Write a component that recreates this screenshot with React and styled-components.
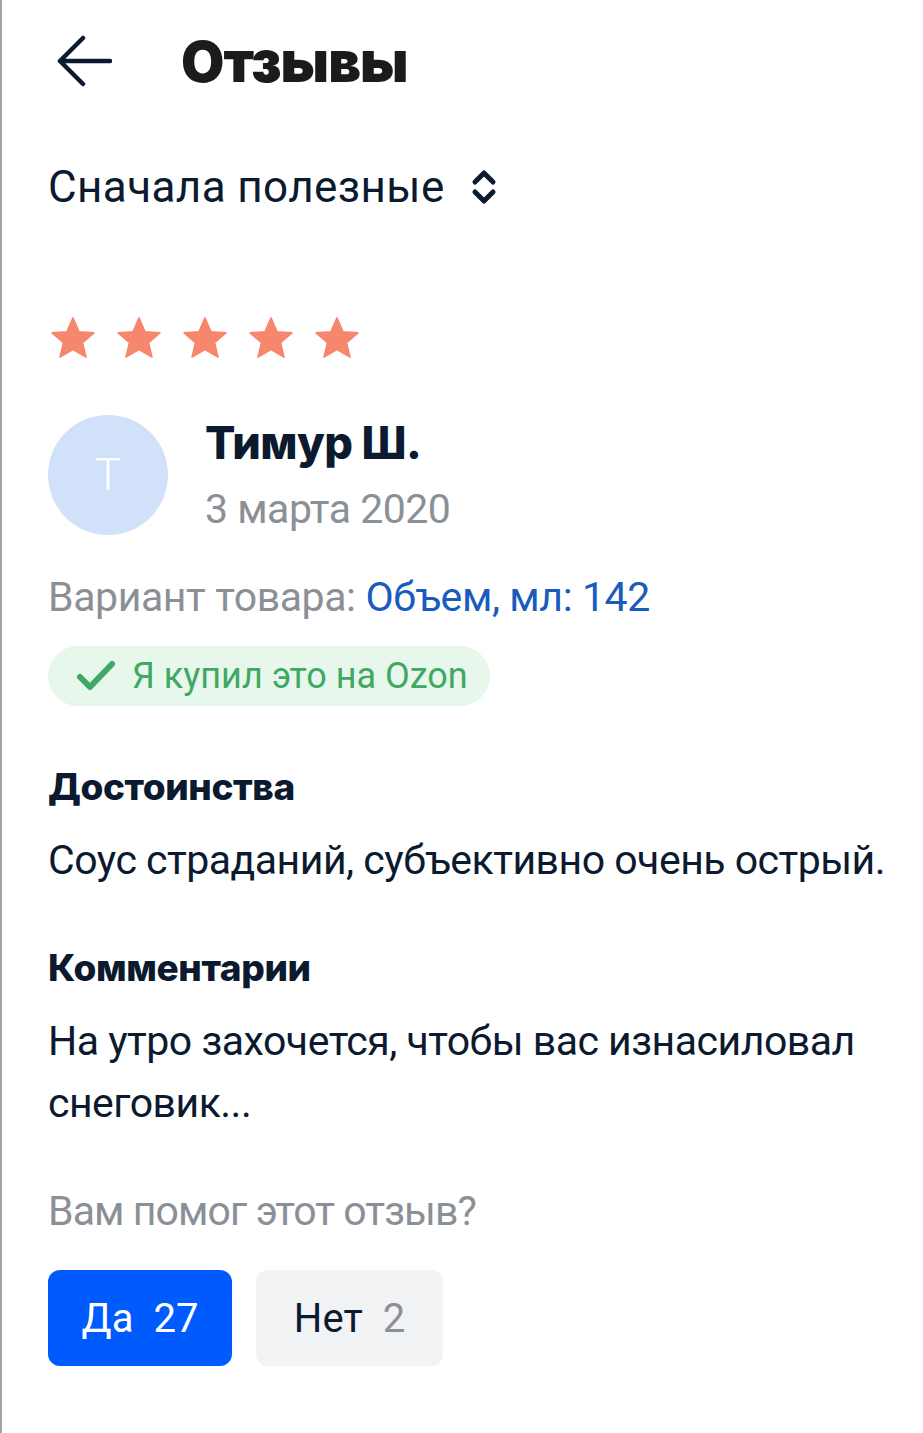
import React from 'react';
import styled, { createGlobalStyle } from 'styled-components';

const GlobalStyle = createGlobalStyle`
  html, body {
    margin: 0;
    padding: 0;
    background: #ffffff;
  }
  body {
    font-family: Roboto, "Noto Sans", sans-serif;
    color: #0b1a2e;
  }
`;

const Page = styled.div`
  min-height: 1433px;
  box-sizing: border-box;
  border-left: 2px solid #a3a3a3;
  padding: 0 0 0 46px;
  display: flex;
  flex-direction: column;
`;

const Header = styled.header`
  height: 124px;
  display: flex;
  align-items: center;
  gap: 67px;
`;

const BackButton = styled.button`
  border: 0;
  background: none;
  padding: 0;
  width: 60px;
  height: 60px;
  display: flex;
  align-items: center;
  justify-content: center;
  margin-left: 6px;
  color: #0b1a2e;
`;

const Title = styled.h1`
  margin: 0;
  font-family: Inter, sans-serif;
  font-weight: 900;
  font-size: 56px;
  letter-spacing: -1px;
  color: #1b1b1b;
`;

const Sort = styled.div`
  margin-top: 33px;
  display: flex;
  align-items: center;
  gap: 26px;
  font-size: 44px;
  letter-spacing: 0.4px;
  line-height: 60px;
  color: #0b1a2e;
`;

const Stars = styled.div`
  margin-top: 98px;
  display: flex;
  gap: 20px;
  height: 46px;
  padding-left: 2px;
`;

const Author = styled.div`
  margin-top: 54px;
  display: flex;
  gap: 37px;
`;

const Avatar = styled.div`
  width: 120px;
  height: 120px;
  border-radius: 50%;
  background: #d1e1fa;
  color: #ffffff;
  display: flex;
  align-items: center;
  justify-content: center;
  font-size: 44px;
  font-weight: 300;
`;

const AuthorInfo = styled.div`
  display: flex;
  flex-direction: column;
  gap: 10px;
`;

const Name = styled.div`
  font-family: Inter, sans-serif;
  font-weight: 800;
  font-size: 45px;
  letter-spacing: -0.6px;
  line-height: 56px;
  color: #0b1a2e;
`;

const Muted = styled.div`
  font-size: 41px;
  letter-spacing: ${p => p.$ls ?? -0.5}px;
  line-height: 56px;
  color: #8b9097;
  margin-top: ${p => p.$top || 0}px;
`;

const Link = styled.span`
  color: #1a5cbd;
`;

const Badge = styled.div`
  margin-top: 21px;
  align-self: flex-start;
  height: 60px;
  padding: 0 22px 0 28px;
  border-radius: 30px;
  background: #e7f7eb;
  color: #3fa862;
  display: flex;
  align-items: center;
  gap: 16px;
  font-size: 36px;
`;

const SectionTitle = styled.h2`
  margin: ${p => p.$top}px 0 0;
  font-family: Inter, sans-serif;
  font-weight: 800;
  font-size: 37px;
  letter-spacing: -0.4px;
  line-height: 56px;
  color: #0b1a2e;
`;

const Text = styled.p`
  margin: ${p => p.$top}px 0 0;
  font-size: 41px;
  letter-spacing: -0.5px;
  line-height: 62px;
  color: #0b1a2e;
`;

const Votes = styled.div`
  margin-top: 31px;
  display: flex;
  gap: 24px;
`;

const VoteButton = styled.button`
  height: 96px;
  width: ${p => p.$w}px;
  border: 0;
  border-radius: 12px;
  background: ${p => (p.$primary ? '#005bff' : '#f2f3f5')};
  color: ${p => (p.$primary ? '#ffffff' : '#0b1a2e')};
  font-family: Roboto, sans-serif;
  font-size: 40px;
  display: flex;
  align-items: center;
  justify-content: center;
  gap: 20px;
`;

const Count = styled.span`
  color: ${p => (p.$primary ? '#ffffff' : '#8b9097')};
`;

const ArrowIcon = () => (
  <svg width="56" height="56" viewBox="0 0 56 56" fill="none">
    <path d="M54 27H4M27 4L4 27l23 23" stroke="currentColor" strokeWidth="4.5" strokeLinecap="round" strokeLinejoin="round" />
  </svg>
);

const SortIcon = () => (
  <svg width="26" height="38" viewBox="0 0 26 38" fill="none">
    <path d="M4 14l9-9 9 9M4 24l9 9 9-9" stroke="#0b1a2e" strokeWidth="5" strokeLinecap="round" strokeLinejoin="round" />
  </svg>
);

const Star = () => (
  <svg width="46" height="46" viewBox="0 0 24 24">
    <path d="M12 1.5l3.1 7.2 7.8.6-5.9 5.1 1.8 7.6L12 18l-6.8 4 1.8-7.6-5.9-5.1 7.8-.6z" fill="#f6876d" stroke="#f6876d" strokeWidth="0.8" strokeLinejoin="round" />
  </svg>
);

const Check = () => (
  <svg width="40" height="34" viewBox="0 0 40 34" fill="none">
    <path d="M4 18l10 10L36 5" stroke="#3fa862" strokeWidth="6" strokeLinecap="round" strokeLinejoin="round" />
  </svg>
);

export default function App() {
  return (
    <>
      <GlobalStyle />
      <Page>
        <Header>
          <BackButton aria-label="Назад"><ArrowIcon /></BackButton>
          <Title>Отзывы</Title>
        </Header>

        <Sort>
          Сначала полезные <SortIcon />
        </Sort>

        <Stars>
          {[0, 1, 2, 3, 4].map(i => <Star key={i} />)}
        </Stars>

        <Author>
          <Avatar>T</Avatar>
          <AuthorInfo>
            <Name>Тимур Ш.</Name>
            <Muted>3 марта 2020</Muted>
          </AuthorInfo>
        </Author>

        <Muted $top={32} $ls={-0.4}>
          Вариант товара: <Link>Объем, мл: 142</Link>
        </Muted>

        <Badge>
          <Check />
          Я купил это на Ozon
        </Badge>

        <SectionTitle $top={53}>Достоинства</SectionTitle>
        <Text $top={14}>Соус страданий, субъективно очень острый.</Text>

        <SectionTitle $top={49}>Комментарии</SectionTitle>
        <Text $top={14}>На утро захочется, чтобы вас изнасиловал снеговик...</Text>

        <Muted $top={49} $ls={-0.9}>Вам помог этот отзыв?</Muted>

        <Votes>
          <VoteButton $primary $w={184}>Да <Count $primary>27</Count></VoteButton>
          <VoteButton $w={187}>Нет <Count>2</Count></VoteButton>
        </Votes>
      </Page>
    </>
  );
}
